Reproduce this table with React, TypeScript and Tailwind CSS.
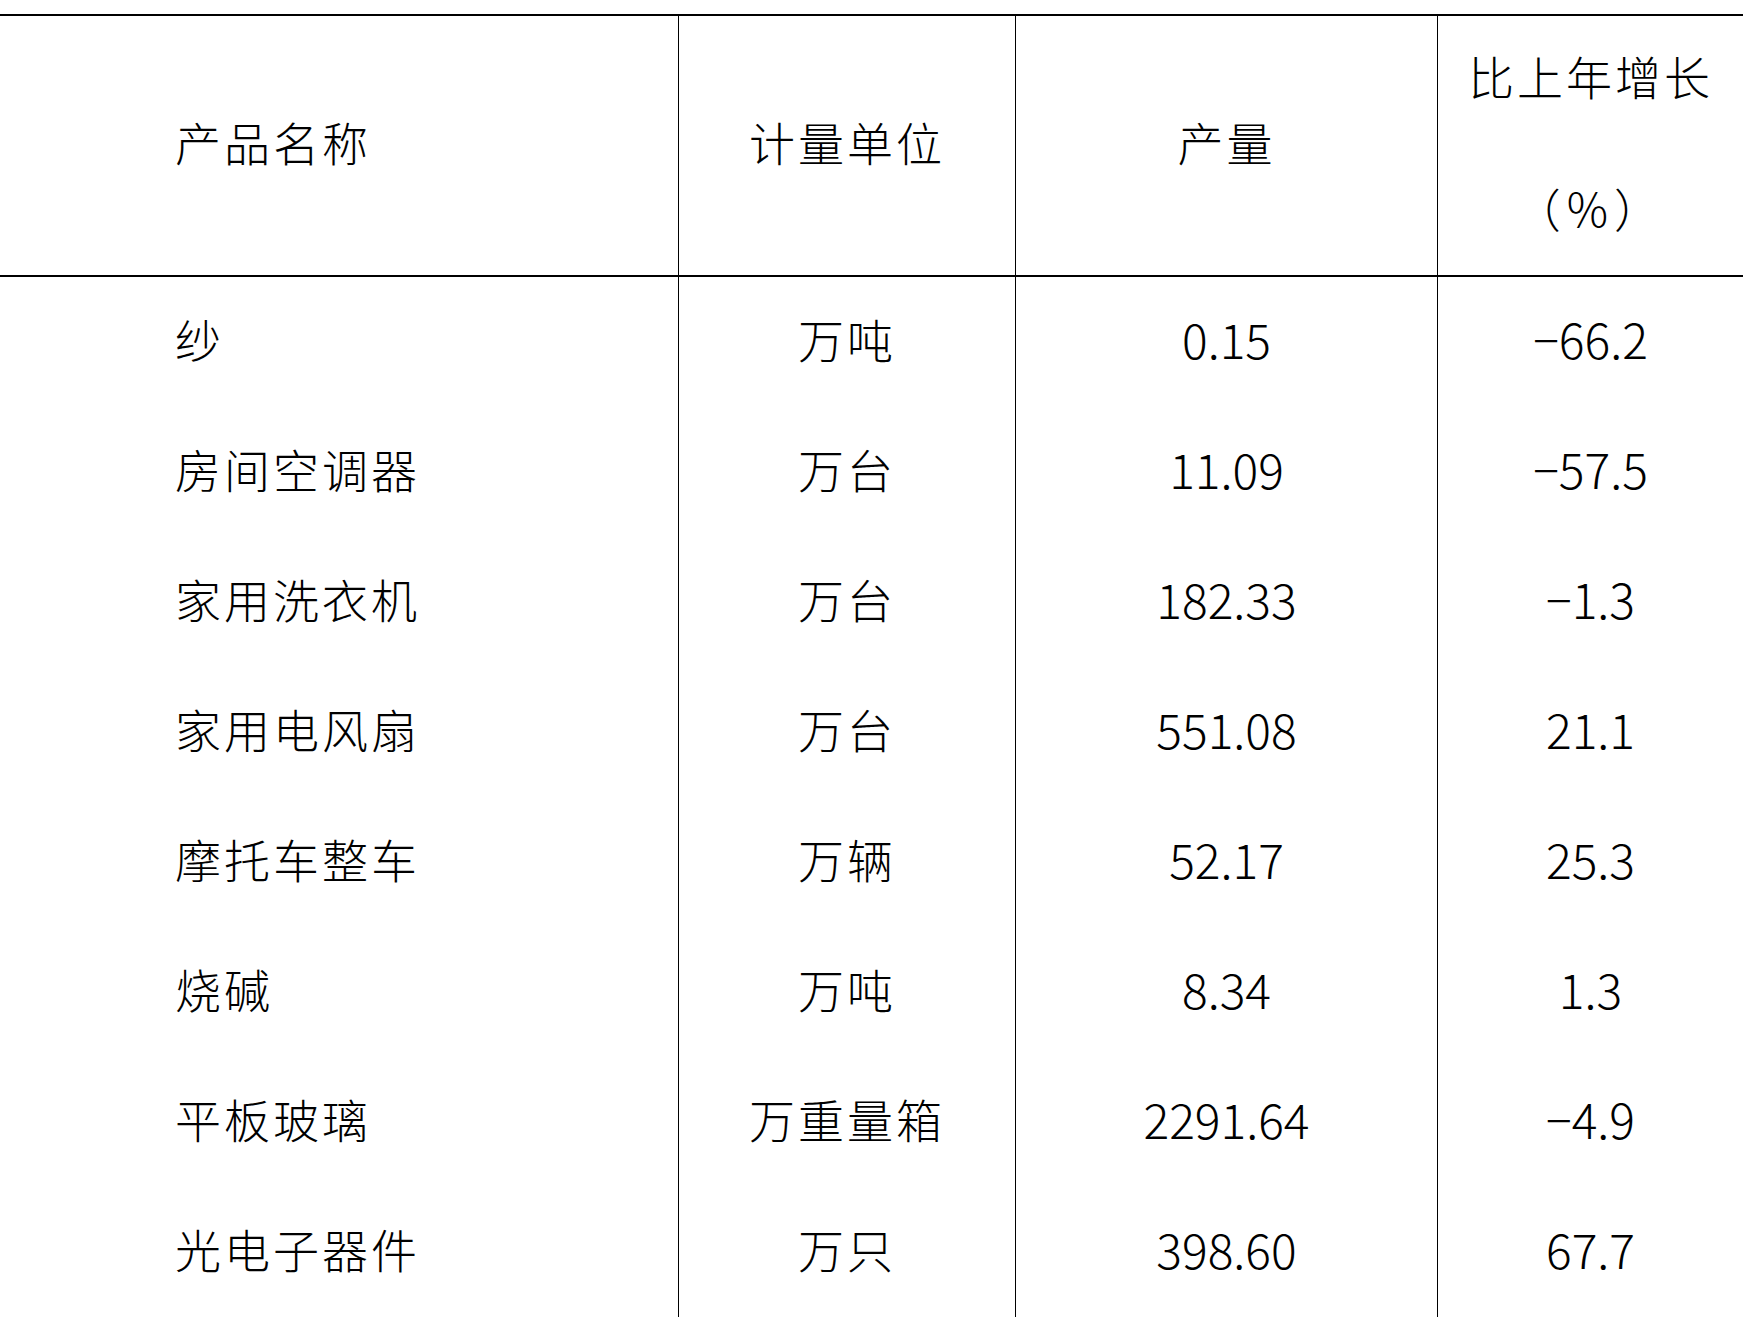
const rows = [
  { name: "纱", unit: "万吨", output: "0.15", growth: "−66.2" },
  { name: "房间空调器", unit: "万台", output: "11.09", growth: "−57.5" },
  { name: "家用洗衣机", unit: "万台", output: "182.33", growth: "−1.3" },
  { name: "家用电风扇", unit: "万台", output: "551.08", growth: "21.1" },
  { name: "摩托车整车", unit: "万辆", output: "52.17", growth: "25.3" },
  { name: "烧碱", unit: "万吨", output: "8.34", growth: "1.3" },
  { name: "平板玻璃", unit: "万重量箱", output: "2291.64", growth: "−4.9" },
  { name: "光电子器件", unit: "万只", output: "398.60", growth: "67.7" },
];

const grid = "grid grid-cols-[678px_337px_422px_306px]";
const cjk = "text-[46px] tracking-[3px] font-light";
const num = "text-[48px] font-light";

export default function App() {
  return (
    <div
      className="min-h-screen w-[1743px] overflow-hidden bg-white pt-[14px] text-black"
      style={{ fontFamily: '"Noto Sans CJK SC", "Noto Sans", sans-serif' }}
    >
      {/* 表头 */}
      <div className={`${grid} h-[263px] border-y-2 border-black`}>
        <div className={`flex items-center pb-[8px] pl-[175px] ${cjk}`}>产品名称</div>
        <div className={`flex items-center justify-center border-l border-black pb-[8px] ${cjk}`}>计量单位</div>
        <div className={`flex items-center justify-center border-l border-black pb-[8px] ${cjk}`}>产量</div>
        <div className="flex flex-col items-center justify-center gap-[86px] border-l border-black pb-[10px]">
          <span className={`${cjk} leading-none`}>比上年增长</span>
          <span className="text-[46px] font-light leading-none tracking-[6px]">（%）</span>
        </div>
      </div>

      {/* 数据行 */}
      {rows.map((r) => (
        <div key={r.name} className={`${grid} h-[130px]`}>
          <div className={`flex items-center pb-[8px] pl-[175px] ${cjk}`}>{r.name}</div>
          <div className={`flex items-center justify-center border-l border-black pb-[8px] ${cjk}`}>{r.unit}</div>
          <div className={`flex items-center justify-center border-l border-black pb-[8px] ${num}`}>{r.output}</div>
          <div className={`flex items-center justify-center border-l border-black pb-[8px] ${num}`}>{r.growth}</div>
        </div>
      ))}
    </div>
  );
}
